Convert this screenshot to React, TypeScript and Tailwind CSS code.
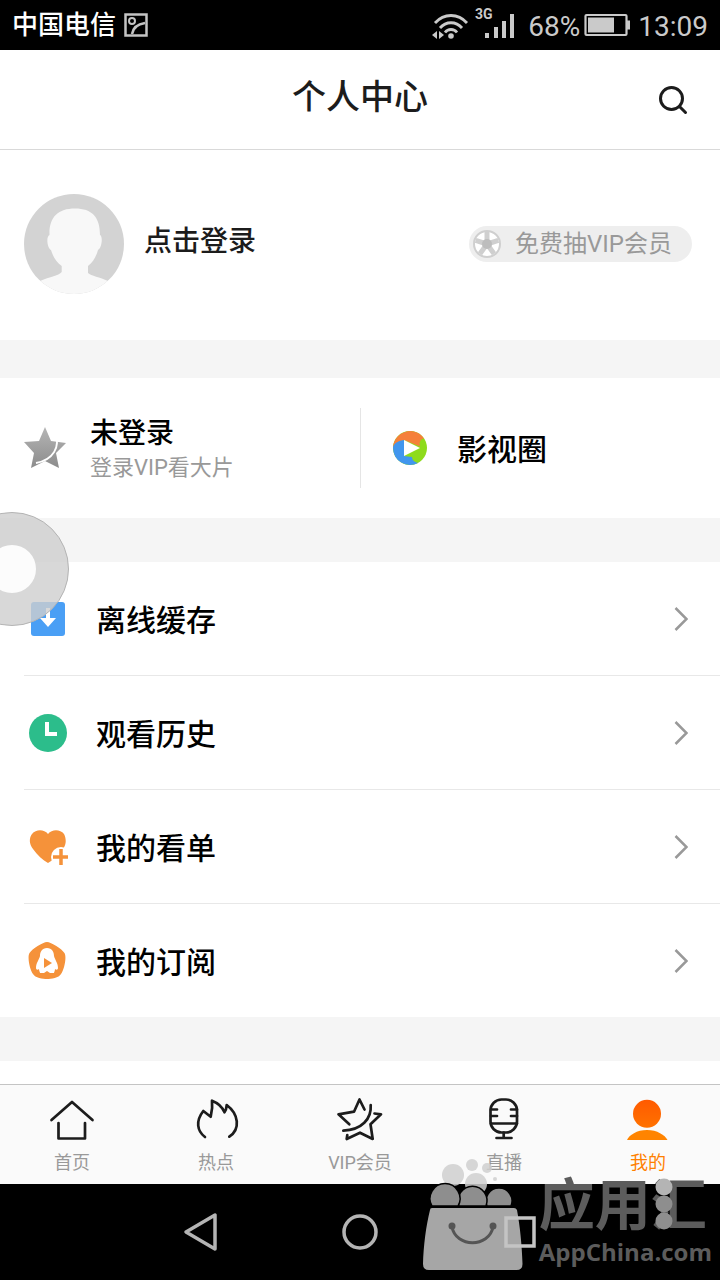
import React, { useState } from 'react'
import clsx from 'clsx'

interface MenuItem {
  key: string
  label: string
  icon: React.ReactNode
}

interface Tab {
  key: string
  label: string
  icon: React.ReactNode
}

const MENU: MenuItem[] = [
  { key: 'offline', label: '离线缓存', icon: <DownloadIcon /> },
  { key: 'history', label: '观看历史', icon: <ClockIcon /> },
  { key: 'watchlist', label: '我的看单', icon: <HeartPlusIcon /> },
  { key: 'subscribe', label: '我的订阅', icon: <SubscribeIcon /> },
]

const TABS: Tab[] = [
  { key: 'home', label: '首页', icon: <HomeIcon /> },
  { key: 'hot', label: '热点', icon: <FlameIcon /> },
  { key: 'vip', label: 'VIP会员', icon: <StarIcon /> },
  { key: 'live', label: '直播', icon: <MicIcon /> },
  { key: 'mine', label: '我的', icon: <UserIcon /> },
]

function DownloadIcon() {
  return (
    <svg viewBox="0 0 40 40" className="size-10" aria-hidden="true">
      <rect x="3" y="3" width="34" height="34" rx="3" fill="#4a9ff5" />
      <path d="M18 9h4v10h6l-8 9-8-9h6z" fill="#fff" />
    </svg>
  )
}

function ClockIcon() {
  return (
    <svg viewBox="0 0 40 40" className="size-10" aria-hidden="true">
      <circle cx="20" cy="20" r="19" fill="#2cbd8b" />
      <path d="M19 9v12h10" fill="none" stroke="#fff" strokeWidth="4" />
    </svg>
  )
}

function HeartPlusIcon() {
  return (
    <svg viewBox="0 0 40 40" className="size-10" aria-hidden="true">
      <path
        d="M20 7C16 2 8 2 4 7c-3 4-3 10 1 15 4 6 10 11 15 14 5-3 11-8 15-14 4-5 3-11 1-15C32 2 24 2 20 7z"
        fill="#f5923a"
      />
      <circle cx="33" cy="30" r="10" fill="#fff" />
      <path d="M33 22v16M25 30h16" stroke="#f5923a" strokeWidth="3.500" />
    </svg>
  )
}

function SubscribeIcon() {
  return (
    <svg viewBox="0 0 40 40" className="size-10" aria-hidden="true">
      <path
        d="M19 1c4 0 15 7 17.500 11 2.500 4-.5 17-3.500 21-2 4-10 5-14 5s-12-1-14-5C2 29-1 16 1.500 12 4 8 15 1 19 1z"
        fill="#f5923a"
      />
      <path
        d="M19 7c-5 0-7 4-7 8-1 4-4 7-4 12 0 2 2 2 3 1 0 2 1 3 1 4h14c0-1 1-2 1-4 1 1 3 1 3-1 0-5-3-8-4-12 0-4-2-8-7-8z"
        fill="#fff"
      />
      <path d="M16 17l8 5-8 5z" fill="#f5923a" />
      <path d="M16 32l3-2 3 2z" fill="#f5923a" />
    </svg>
  )
}

const lineIcon = {
  viewBox: '0 0 48 44',
  className: 'h-11 w-12',
  fill: 'none',
  stroke: '#1c1c1c',
  strokeWidth: 2.7,
  strokeLinecap: 'round' as const,
  strokeLinejoin: 'round' as const,
  'aria-hidden': true,
}

function HomeIcon() {
  return (
    <svg {...lineIcon}>
      <path d="M3.500 23L24 5l20.500 18M10.500 26v15.500h26.500V26" />
    </svg>
  )
}

function FlameIcon() {
  return (
    <svg {...lineIcon}>
      <path d="M13 40C5 34 3.500 24 11.300 14l7.400 5.700c1.500-6 2-10 1.300-16C26 6 30 9 32.500 15.300c1.500-2 2-4 2.200-7.300 12 9 14 24 2.600 31.700" />
    </svg>
  )
}

function StarIcon() {
  return (
    <svg {...lineIcon}>
      <path d="M28.500 12.500L23.500 2.500 18 14.700 2.500 17.300l10.800 10" />
      <path d="M38.500 16.500l6.500.8-10.500 10L36.700 42 24 35.700 10.700 42l.6-4" />
      <path d="M34.700 8c1 14-9 25-27.400 25.700" />
    </svg>
  )
}

function MicIcon() {
  return (
    <svg {...lineIcon}>
      <rect x="10.500" y="2.500" width="26.500" height="33" rx="11" />
      <path d="M11 12.500h6M31 12.500h6M11 19h6M31 19h6M11 26.500h26M23.700 35.500v5M16.500 41h15" />
    </svg>
  )
}

function UserIcon() {
  return (
    <svg viewBox="0 0 48 44" className="h-11 w-12" aria-hidden="true">
      <defs>
        <linearGradient id="user-head" x1="0" y1="0" x2="0" y2="1">
          <stop offset="0" stopColor="#ff5a00" />
          <stop offset="1" stopColor="#ff7200" />
        </linearGradient>
      </defs>
      <circle cx="23" cy="16.800" r="14" fill="url(#user-head)" />
      <path d="M3 43c2-5 10-10 20-10s18 5 20.500 10z" fill="#ff8400" />
    </svg>
  )
}

function Avatar() {
  return (
    <svg viewBox="0 0 100 100" className="size-[100px] shrink-0" aria-hidden="true">
      <defs>
        <clipPath id="avatar-clip">
          <circle cx="50" cy="50" r="50" />
        </clipPath>
      </defs>
      <g clipPath="url(#avatar-clip)">
        <rect width="100" height="100" fill="#d3d3d3" />
        <path
          d="M51 14.500C34 14.500 25 23 25.500 41 22 42 23 54 27 56c2 7 6 13 10.700 16v6C35 82 24 83 16 87v13h68V87c-8-4-17-5-20-8v-7c5-4 8-9 10-16 4-2 5-14 2-15 0-18-8-26.500-25-26.500z"
          fill="#f8f8f8"
        />
      </g>
    </svg>
  )
}

// film reel in front of the VIP draw link
function ReelIcon() {
  return (
    <svg viewBox="0 0 28 28" className="size-7" aria-hidden="true">
      <circle cx="14" cy="14" r="13" fill="#fff" stroke="#cfcfcf" strokeWidth="2" />
      <path d="M14 14V2M14 14l11.400-3.700M14 14l7 9.700M14 14l-7 9.700M14 14L2.600 10.300" stroke="#cfcfcf" strokeWidth="5" />
      <circle cx="14" cy="14" r="5" fill="#bdbdbd" />
    </svg>
  )
}

function GreyStar() {
  return (
    <svg viewBox="0 0 42 42" className="size-[42px] shrink-0" aria-hidden="true">
      <defs>
        <linearGradient id="grey-star" x1="0" y1="0" x2="0" y2="1">
          <stop offset="0" stopColor="#b5b5b5" />
          <stop offset="1" stopColor="#8c8c8c" />
        </linearGradient>
      </defs>
      <path d="M21 0l6 14 15 2-10 10 3 15-14-7-14 7 3-15L0 15l15-1z" fill="url(#grey-star)" />
      <path d="M31 5c6 15-2 28-19 31" fill="none" stroke="#fff" strokeWidth="1.800" />
    </svg>
  )
}

function PlayRing() {
  return (
    <svg viewBox="0 0 34 34" className="size-[34px] shrink-0" aria-hidden="true">
      <circle cx="17" cy="17" r="17" fill="#8edb1c" />
      <path d="M0 17A17 17 0 0 1 31 7.500c-4 0-5 5-4 8L11 9z" fill="#f5803a" />
      <path d="M0 17c0-3 3-7 11-8v16l8 1c0 3 2 5 6 6A17 17 0 0 1 0 17z" fill="#4196ee" />
      <path d="M11 9l16 8-16 8z" fill="#fff" />
    </svg>
  )
}

function StatusBar() {
  return (
    <div className="flex h-[50px] items-center justify-between bg-black px-3 text-white">
      <div className="flex items-center gap-2">
        <span className="text-[26px] leading-8 font-medium">中国电信</span>
        <svg viewBox="0 0 24 24" className="size-6" fill="none" stroke="#c4c4c4" strokeWidth="2.500" aria-hidden="true">
          <rect x="1.500" y="1.500" width="21" height="21" />
          <circle cx="8" cy="8" r="3" strokeWidth="2" />
          <path d="M8 21c1-6 6-10 13-11" />
        </svg>
      </div>
      <div className="flex items-center text-[28px] leading-8 text-[#cacaca]">
        <svg viewBox="0 -5 84 44" className="h-11 w-[84px]" aria-hidden="true">
          <g fill="none" stroke="#cacaca" strokeWidth="2.800">
            <path d="M3 15c9-10 23-10 32 0" />
            <path d="M8 20c6-7 16-7 22 0" />
            <path d="M13 24.500c3-4 9-4 12 0" />
          </g>
          <circle cx="19" cy="28" r="2.800" fill="#cacaca" />
          <path d="M5 23v8l-5-4zM7 23v8l5-4z" fill="#cacaca" />
          <path d="M53 25h4v5h-4zM62 19h4v11h-4zM70 13h4v17h-4zM78 6h4v24h-4z" fill="#cacaca" />
          <text x="43" y="11" fontSize="14" fontWeight="700" fill="#cacaca">
            3G
          </text>
        </svg>
        <span className="ml-3 pt-1">68%</span>
        <svg viewBox="0 0 46 24" className="mx-1 h-6 w-[46px]" aria-hidden="true">
          <rect x="1.500" y="2" width="41" height="20" rx="1" fill="none" stroke="#cacaca" strokeWidth="2.200" />
          <rect x="4" y="4.500" width="26" height="15" fill="#cacaca" />
          <path d="M43 7.500h3v9h-3z" fill="#cacaca" />
        </svg>
        <span className="ml-1 pt-1">13:09</span>
      </div>
    </div>
  )
}

function Watermark() {
  return (
    <div className="pointer-events-none absolute right-2 bottom-2 flex items-end gap-2">
      <svg viewBox="0 0 110 114" className="h-[114px] w-[110px]" aria-hidden="true">
        <g fill="#cfcfcf" fillOpacity="0.850">
          <circle cx="32" cy="17" r="11" />
          <circle cx="51" cy="7" r="6" />
          <circle cx="55" cy="26" r="11" />
          <circle cx="66" cy="10" r="5" />
          <circle cx="74" cy="21" r="2" />
        </g>
        <g fill="#8e8e8e" stroke="#000" strokeWidth="1.500">
          <path d="M66 48a13 13 0 1 1 24 0z" />
          <path d="M38 48a14.500 14.500 0 1 1 27 0z" />
          <path d="M11 48a15 15 0 1 1 26 0z" />
        </g>
        <path d="M11 50h82q2 0 3 2c3 16 5 36 5.500 54q0 6-6 6H8q-6 0-6-6C2.500 88 5 68 9 52q0-2 2-2z" fill="#a6a6a6" />
        <g fill="#555" stroke="#555" strokeWidth="3">
          <circle cx="31" cy="68" r="2" />
          <circle cx="72" cy="68" r="2" />
          <path d="M31 69c4 21 37 21 41 0" fill="none" />
        </g>
      </svg>
      <div className="flex flex-col pb-1">
        <div className="relative text-[56px] leading-[60px] font-bold text-[#5c5c5c]">
          应用汇
          <svg viewBox="0 0 18 54" className="absolute top-0 left-[116px] h-[54px] w-[18px]" aria-hidden="true">
            <circle cx="9" cy="11" r="8.500" fill="#b4b4b4" />
            <circle cx="9" cy="28" r="8.500" fill="#8e8e8e" />
            <circle cx="9" cy="45" r="8.500" fill="#8e8e8e" />
          </svg>
        </div>
        <span className="font-['Open_Sans',sans-serif] text-2xl leading-8 font-bold text-[#5c5c5c]">AppChina.com</span>
      </div>
    </div>
  )
}

export default function App() {
  const [active, setActive] = useState('mine')

  return (
    <div className="relative flex min-h-screen flex-col overflow-hidden bg-white font-[Roboto,'Noto_Sans_CJK_SC',sans-serif] text-[#1c1c1c]">
      <StatusBar />

      <header className="grid h-[100px] grid-cols-[1fr_auto_1fr] items-center border-b border-[#d9d9d9] px-8">
        <span />
        <h1 className="pb-1.5 text-[34px] leading-10 font-medium">个人中心</h1>
        <button type="button" aria-label="搜索" className="justify-self-end">
          <svg
            viewBox="0 0 30 30"
            className="size-[30px]"
            fill="none"
            stroke="#1c1c1c"
            strokeWidth="3"
            strokeLinecap="round"
            aria-hidden="true"
          >
            <circle cx="13.500" cy="13.500" r="11" />
            <path d="M21.500 21.500l6 6" />
          </svg>
        </button>
      </header>

      <main className="flex-1">
        <section className="flex h-[190px] items-center justify-between pr-7 pb-0.5 pl-6">
          <button type="button" className="flex items-center gap-5">
            <Avatar />
            <span className="pb-1 text-[28px] leading-9 font-medium">点击登录</span>
          </button>
          <a href="#vip" className="flex h-9 items-center gap-3.5 rounded-full bg-[#eeeeee] pr-5 pl-1 text-2xl text-[#999999]">
            <ReelIcon />
            免费抽VIP会员
          </a>
        </section>

        <div className="h-[38px] bg-[#f5f5f5]" />

        <section className="flex h-[140px] items-center text-black">
          <button type="button" className="flex w-1/2 items-center gap-6 pl-6 text-left">
            <GreyStar />
            <span className="flex flex-col pt-1">
              <span className="text-[28px] leading-9 font-medium">未登录</span>
              <span className="text-[22px] leading-8 text-[#999999]">登录VIP看大片</span>
            </span>
          </button>
          <div className="h-20 w-px bg-[#e5e5e5]" />
          <button type="button" className="flex flex-1 items-center gap-[30px] pl-8 text-left">
            <PlayRing />
            <span className="pt-1 text-[30px] leading-9 font-medium">影视圈</span>
          </button>
        </section>

        <div className="h-11 bg-[#f5f5f5]" />

        <ul className="ml-6 divide-y divide-[#e8e8e8] text-black">
          {MENU.map((item) => (
            <li key={item.key}>
              <button type="button" className="flex h-[113px] w-full items-center gap-7 pr-8 pl-1 text-left">
                {item.icon}
                <span className="flex-1 pt-1 text-[30px] leading-9 font-medium">{item.label}</span>
                <svg
                  viewBox="0 0 14 24"
                  className="h-6 w-3.5"
                  fill="none"
                  stroke="#999999"
                  strokeWidth="2.500"
                  aria-hidden="true"
                >
                  <path d="M1.500 1l11 11-11 11" />
                </svg>
              </button>
            </li>
          ))}
        </ul>

        <div className="h-11 bg-[#f5f5f5]" />
      </main>

      <nav className="flex h-[100px] border-t border-[#c4c4c4] bg-[#fafafa] pt-3">
        {TABS.map((tab) => (
          <button
            key={tab.key}
            type="button"
            onClick={() => setActive(tab.key)}
            className={clsx(
              'flex flex-1 flex-col items-center gap-2.5 text-lg leading-6',
              active === tab.key ? 'text-[#ff8000]' : 'text-[#999999]',
            )}
          >
            {tab.icon}
            <span>{tab.label}</span>
          </button>
        ))}
      </nav>

      <Watermark />

      <div className="flex h-24 items-center justify-center bg-black">
        <button type="button" aria-label="返回" className="flex w-40 justify-center">
          <svg viewBox="0 0 36 40" className="h-10 w-9" fill="none" stroke="#b4b4b4" strokeWidth="3.500" strokeLinejoin="round" aria-hidden="true">
            <path d="M33 3v34L4 20z" />
          </svg>
        </button>
        <button type="button" aria-label="主屏幕" className="flex w-40 justify-center">
          <svg viewBox="0 0 36 36" className="size-9" fill="none" stroke="#b4b4b4" strokeWidth="3.500" aria-hidden="true">
            <circle cx="18" cy="18" r="16" />
          </svg>
        </button>
        <button type="button" aria-label="最近任务" className="relative z-10 flex w-40 justify-center">
          <svg viewBox="0 0 32 32" className="size-8" fill="none" stroke="#c4c4c4" strokeWidth="3.500" aria-hidden="true">
            <rect x="2" y="2" width="28" height="28" />
          </svg>
        </button>
      </div>

      {/* assistive touch ball, half docked to the left edge */}
      <button
        type="button"
        aria-label="悬浮球"
        className="absolute top-[512px] -left-[45px] flex size-[114px] items-center justify-center rounded-full border border-[#b4b4b4] bg-[#cecece]/80"
      >
        <span className="size-12 rounded-full bg-[#fcfcfc]" />
      </button>
    </div>
  )
}
